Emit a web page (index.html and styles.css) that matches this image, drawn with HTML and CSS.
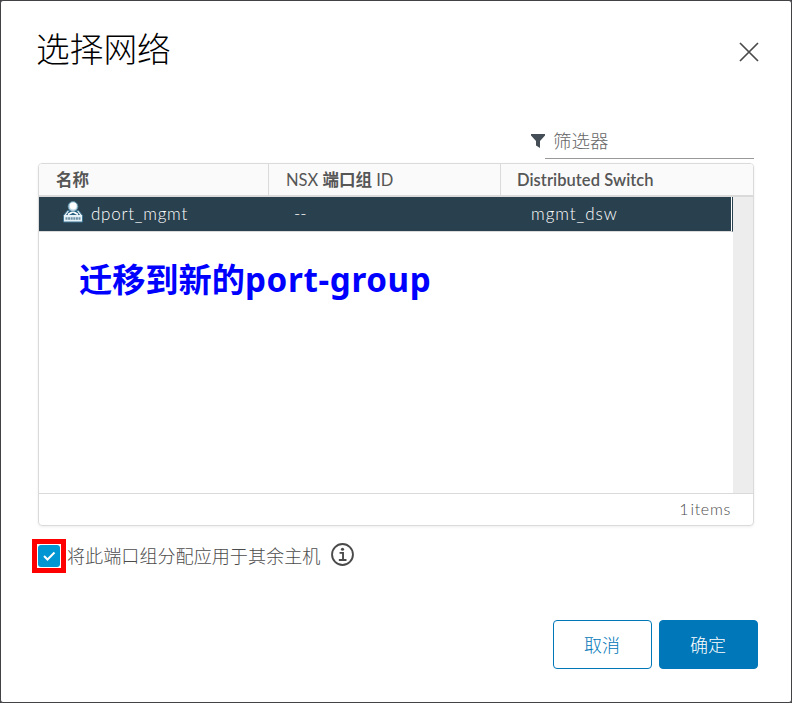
FILE: index.html
```html
<!DOCTYPE html>
<html lang="zh-CN">
<head>
<meta charset="utf-8">
<title>选择网络</title>
<link rel="stylesheet" href="styles.css">
</head>
<body>
<main class="dialog">
  <header class="dialog-header">
    <h1 class="title">选择网络</h1>
    <svg class="close" viewBox="0 0 20 20"><path d="M1 1 19 19M19 1 1 19"/></svg>
  </header>
  <div class="filter">
    <svg class="funnel" viewBox="0 0 14 14"><path d="M0 0H14V1.5L9 7V14L5 11.5V7L0 1.5Z"/></svg>
    <div class="filter-input"><span class="filter-text">筛选器</span></div>
  </div>
  <section class="grid">
    <div class="grid-head">
      <div class="th name">名称</div>
      <div class="th nsx"><span class="nsx-text">NSX <b>端口组</b> ID</span></div>
      <div class="th switch"><span class="switch-text">Distributed Switch</span></div>
    </div>
    <div class="grid-body">
      <div class="rows">
        <div class="row">
          <div class="td td-name">
            <svg class="port" viewBox="0 0 22 22">
              <path d="M5.500 9.500H16.500L20.500 14.500V21H1.500V14.500Z" fill="#e6f2f8" stroke="#3d7594"/>
              <path d="M4 14 7 10H15L18 14Z" fill="#286080"/>
              <path d="M6 13.500 11 10.800 16 13.500" fill="none" stroke="#fff" stroke-width="1.8"/>
              <circle cx="11" cy="5.500" r="4.900" fill="#b9d6e5" stroke="#5b8ba3" stroke-width=".8"/>
              <circle cx="11.200" cy="5" r="3.400" fill="#fff"/>
              <path d="M3.500 17.500H18.500" stroke="#6d92a6" stroke-width="2.600" stroke-dasharray="2 .6"/>
            </svg>
            <span class="port-name">dport_mgmt</span>
          </div>
          <div class="td td-nsx">--</div>
          <div class="td td-switch">mgmt_dsw</div>
        </div>
        <p class="note">迁移到新的<span class="note-latin">port-group</span></p>
      </div>
      <div class="gutter"></div>
    </div>
    <div class="grid-foot"><span class="count">1</span><span class="items">items</span></div>
  </section>
  <div class="apply">
    <span class="mark"><span class="checkbox"><svg viewBox="0 0 22 22"><path d="M6 11 9.500 14.500 16.500 7.500"/></svg></span></span>
    <span class="apply-text">将此端口组分配应用于其余主机</span>
    <svg class="info" viewBox="0 0 22 22"><circle cx="11" cy="11" r="10"/><path d="M8.200 9.500H11.500V16M7.500 16.200H14.800"/><circle class="dot" cx="11" cy="6" r="1.500"/></svg>
  </div>
  <footer class="actions">
    <button class="btn">取消</button>
    <button class="btn primary">确定</button>
  </footer>
</main>
</body>
</html>
```
FILE: styles.css
```css
* { box-sizing: border-box; }
body {
  margin: 0;
  background: #424246;
  font-family: Lato, "Noto Sans CJK SC", sans-serif;
  font-weight: 300;
  color: #4c4c4c;
}
.dialog {
  width: 792px;
  height: 703px;
  border: 1px solid #424246;
  border-radius: 3px;
  background: #fff;
  overflow: hidden;
}
.dialog-header {
  display: flex;
  justify-content: space-between;
  padding: 23px 32.500px 0 35px;
  height: 125px;
}
.title {
  margin: 0;
  font-size: 33.700px;
  line-height: 50px;
  font-weight: 300;
  color: #000;
}
.close {
  width: 20px;
  height: 20px;
  margin-top: 17.500px;
  fill: none;
  stroke: #4a4a4a;
  stroke-width: 1.7;
}
.filter {
  display: flex;
  justify-content: flex-end;
  height: 37px;
  padding-right: 37px;
}
.funnel {
  width: 14px;
  height: 14px;
  margin-top: 8px;
  fill: #454e56;
}
.filter-input {
  width: 209px;
  height: 33px;
  border-bottom: 1px solid #999;
  padding-left: 8px;
  font-size: 18.500px;
  line-height: 30px;
  color: #666;
}
.grid {
  width: 716px;
  height: 363px;
  margin-left: 37px;
  border: 1px solid #dadada;
  border-radius: 4px;
  box-shadow: 0 1px 3px #eee;
  overflow: hidden;
  display: flex;
  flex-direction: column;
}
.grid-head {
  display: flex;
  height: 33px;
  background: #fafafa;
  border-bottom: 2px solid #dadada;
  font-size: 16.500px;
  line-height: 33px;
  color: #565656;
}
.th {
  padding-left: 16px;
  white-space: nowrap;
  border-right: 1px solid #dadada;
}
.name { width: 230px; padding-left: 17px; font-weight: 600; }
.nsx { width: 232px; padding-left: 17px; font-weight: 400; }
.nsx b { font-weight: 700; }
.switch { flex: 1; border-right: 0; font-weight: 600; letter-spacing: .05px; }
.grid-body {
  display: flex;
  flex: 1;
}
.rows { width: 694px; }
.row {
  display: flex;
  height: 35px;
  border-right: 1px solid #29404e;
  border-bottom: 1px solid #dadada;
  background: linear-gradient(90deg, #29404e 692px, #fff 692px);
  color: #fff;
  font-size: 17px;
  line-height: 34px;
}
.td-name { display: flex; width: 230px; padding-left: 23px; }
.port { width: 22px; height: 22px; margin: 4px 7px 0 0; }
.port-name { letter-spacing: .75px; }
.td-nsx { width: 232px; padding-left: 25px; }
.td-switch { padding-left: 30px; letter-spacing: .95px; }
.note {
  margin: 23px 0 0 40px;
  font-size: 33.200px;
  line-height: 48px;
  font-weight: 700;
  color: #00f;
  white-space: nowrap;
}
.note-latin { font-family: "Noto Sans", sans-serif; letter-spacing: .65px; }
.gutter { flex: 1; background: #ededed; }
.grid-foot {
  display: flex;
  justify-content: flex-end;
  gap: 2px;
  height: 32px;
  padding-right: 22px;
  border-top: 1px solid #dadada;
  font-size: 16px;
  line-height: 30px;
}
.items { letter-spacing: .7px; }
.apply {
  display: flex;
  align-items: center;
  height: 34px;
  margin: 13px 0 0 31px;
}
.mark { width: 34px; height: 34px; border: 5px solid #f00; padding: 1px; }
.checkbox { display: block; width: 22px; height: 22px; border-radius: 3px; background: #0095d3; }
.checkbox svg { display: block; fill: none; stroke: #fff; stroke-width: 2; }
.apply-text { margin-left: 1px; font-size: 18.100px; line-height: 34px; }
.info {
  width: 23px;
  height: 23px;
  margin-left: 11px;
  margin-top: -3px;
  fill: none;
  stroke: #4a4a4a;
  stroke-width: 1.8;
}
.info .dot { fill: #4a4a4a; stroke: none; }
.actions {
  display: flex;
  justify-content: flex-end;
  gap: 7px;
  padding: 47px 33px 0 0;
}
.btn {
  width: 99px;
  height: 49px;
  padding: 0 1px 2px 0;
  border: 1px solid #0077b8;
  border-radius: 4px;
  background: #fff;
  color: #0077b8;
  font: inherit;
  font-size: 18px;
}
.primary { background: #0077b8; color: #fff; }
```
